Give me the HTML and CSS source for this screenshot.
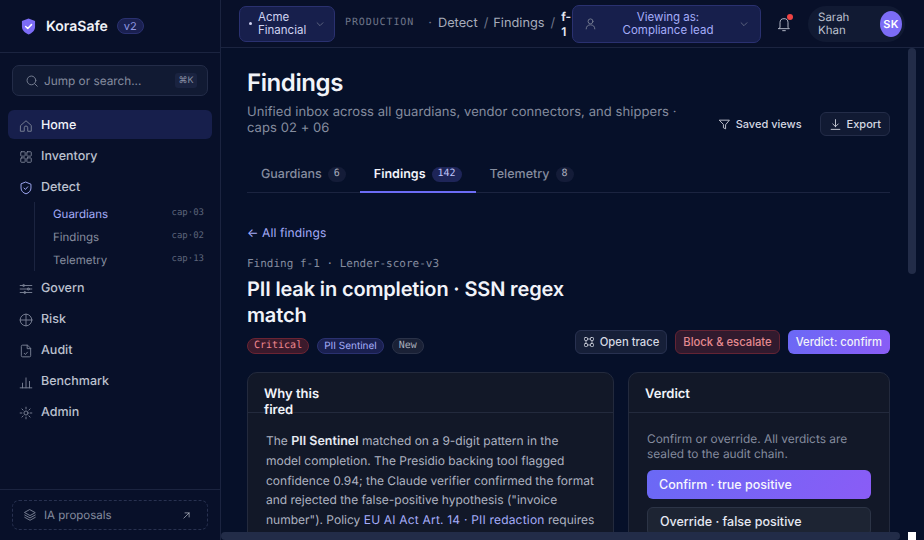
FILE: index.html
```html
<!DOCTYPE html>
<html lang="en">
<head>
    <meta charset="UTF-8">
    <meta name="viewport" content="width=device-width, initial-scale=1.0">
    <title>KoraSafe - Findings</title>
    <link rel="stylesheet" href="styles.css">
</head>
<body>
    <div class="app">
        <!-- Sidebar -->
        <aside class="sidebar">
            <div class="brand">
                <svg class="brand-logo" width="15" height="17" viewBox="0 0 16 18"><path d="M8 0.5 15 3v6c0 4.200-3 7-7 8.500C4 15.500 1 13.200 1 9V3z" fill="#7c6cf6"/><path d="M5 9l2.200 2.100L11.200 7" fill="none" stroke="#fff" stroke-width="1.600" stroke-linecap="round" stroke-linejoin="round"/></svg>
                <span class="brand-name">KoraSafe</span>
                <span class="brand-tag">v2</span>
            </div>
            <div class="search">
                <svg class="icon" width="14" height="14" viewBox="0 0 24 24"><circle cx="11" cy="11" r="7.500"/><path d="M21 21l-4.500-4.500"/></svg>
                <span class="search-text">Jump or search...</span>
                <span class="kbd">⌘K</span>
            </div>
            <nav class="nav">
                <a class="nav-item active">
                    <svg class="icon" width="14" height="14" viewBox="0 0 24 24"><path d="M3 11l9-8 9 8v10h-6v-6a3 3 0 0 0-6 0v6H3z"/></svg>
                    Home
                </a>
                <a class="nav-item">
                    <svg class="icon" width="14" height="14" viewBox="0 0 24 24"><rect x="3" y="3" width="7.500" height="7.500" rx="1"/><rect x="13.500" y="3" width="7.500" height="7.500" rx="1"/><rect x="3" y="13.500" width="7.500" height="7.500" rx="1"/><rect x="13.500" y="13.500" width="7.500" height="7.500" rx="1"/></svg>
                    Inventory
                </a>
                <a class="nav-item">
                    <svg class="icon accent" width="14" height="14" viewBox="0 0 24 24"><path d="M12 2l8.500 3.500V12c0 5-3.500 8.500-8.500 10-5-1.500-8.500-5-8.500-10V5.500z"/><path d="M8.500 12l2.500 2.500 4-4.500"/></svg>
                    Detect
                </a>
                <div class="subnav">
                    <a class="sub-item current"><span>Guardians</span><span class="cap">cap·03</span></a>
                    <a class="sub-item"><span>Findings</span><span class="cap">cap·02</span></a>
                    <a class="sub-item"><span>Telemetry</span><span class="cap">cap·13</span></a>
                </div>
                <a class="nav-item">
                    <svg class="icon" width="14" height="14" viewBox="0 0 24 24"><path d="M2 6h20M2 12h20M2 18h20"/><circle cx="8" cy="6" r="1.800"/><circle cx="16" cy="12" r="1.800"/><circle cx="10" cy="18" r="1.800"/></svg>
                    Govern
                </a>
                <a class="nav-item">
                    <svg class="icon" width="14" height="14" viewBox="0 0 24 24"><circle cx="12" cy="12" r="10"/><path d="M2 12h20M12 2v20"/></svg>
                    Risk
                </a>
                <a class="nav-item">
                    <svg class="icon" width="14" height="14" viewBox="0 0 24 24"><path d="M14 2H6a2 2 0 0 0-2 2v16a2 2 0 0 0 2 2h12a2 2 0 0 0 2-2V8z"/><path d="M14 2v6h6M9 16l2 2 3.500-4"/></svg>
                    Audit
                </a>
                <a class="nav-item">
                    <svg class="icon" width="14" height="14" viewBox="0 0 24 24"><path d="M2 22h20M6 22v-8M12 22V5M18 22v-11"/></svg>
                    Benchmark
                </a>
                <a class="nav-item">
                    <svg class="icon" width="14" height="14" viewBox="0 0 24 24"><circle cx="12" cy="12" r="3.500"/><path d="M12 2v3M12 19v3M2 12h3M19 12h3M5 5l2 2M17 17l2 2M5 19l2-2M17 7l2-2"/></svg>
                    Admin
                </a>
            </nav>
            <div class="sidebar-foot">
                <div class="proposals">
                    <svg class="icon" width="14" height="14" viewBox="0 0 24 24"><path d="M12 3l9 5-9 5-9-5z"/><path d="M3 12l9 5 9-5M3 16l9 5 9-5"/></svg>
                    <span class="proposals-text">IA proposals</span>
                    <svg class="icon light" width="9" height="9" viewBox="0 0 24 24"><path d="M5 19L19 5M8 5h11v11"/></svg>
                </div>
            </div>
        </aside>

        <div class="content">
            <!-- Topbar -->
            <header class="topbar">
                <button class="tenant">
                    <span class="dot"></span>
                    <span class="tenant-name">Acme Financial</span>
                    <svg class="icon" width="10" height="10" viewBox="0 0 24 24"><path d="M5 9l7 7 7-7"/></svg>
                </button>
                <span class="env">PRODUCTION</span>
                <div class="crumbs">
                    <span class="crumb-dot">·</span>
                    <span>Detect</span><span class="sep">/</span>
                    <span>Findings</span><span class="sep">/</span>
                    <span class="crumb-now">f-1</span>
                </div>
                <button class="viewing">
                    <svg class="icon" width="13" height="13" viewBox="0 0 24 24"><circle cx="12" cy="8" r="4.500"/><path d="M4 22c0-5 3.500-7.500 8-7.500s8 2.500 8 7.500"/></svg>
                    <span class="viewing-text">Viewing as: Compliance lead</span>
                    <svg class="icon" width="10" height="10" viewBox="0 0 24 24"><path d="M5 9l7 7 7-7"/></svg>
                </button>
                <div class="bell">
                    <svg class="icon bell-icon" width="16" height="16" viewBox="0 0 24 24"><path d="M6 17V10a6 6 0 0 1 12 0v7l2 2H4z"/><path d="M10 22h4"/></svg>
                    <span class="bell-dot"></span>
                </div>
                <div class="user">
                    <span class="user-name">Sarah Khan</span>
                    <span class="avatar">SK</span>
                </div>
            </header>

            <!-- Main scroll area -->
            <main class="main">
                <div class="viewport">
                    <div class="page">
                        <div class="page-head">
                            <div class="page-title">
                                <h1>Findings</h1>
                                <p>Unified inbox across all guardians, vendor connectors, and shippers · caps 02 + 06</p>
                            </div>
                            <div class="page-actions">
                                <button class="btn-plain">
                                    <svg class="icon light" width="13" height="13" viewBox="0 0 24 24"><path d="M3 4h18l-7 8.500V20l-4-2v-5.500z"/></svg>
                                    Saved views
                                </button>
                                <button class="btn-line">
                                    <svg class="icon light" width="13" height="13" viewBox="0 0 24 24"><path d="M12 3v13M7 11l5 5 5-5M4 21h16"/></svg>
                                    Export
                                </button>
                            </div>
                        </div>

                        <div class="tabs">
                            <a class="tab">Guardians <span class="count">6</span></a>
                            <a class="tab on">Findings <span class="count">142</span></a>
                            <a class="tab">Telemetry <span class="count">8</span></a>
                        </div>

                        <a class="back">← All findings</a>
                        <div class="finding-id">Finding f-1 · Lender-score-v3</div>

                        <div class="finding-head">
                            <div class="finding-title">
                                <h2>PII leak in completion · SSN regex match</h2>
                                <div class="badges">
                                    <span class="badge critical">Critical</span>
                                    <span class="badge sentinel">PII Sentinel</span>
                                    <span class="badge fresh">New</span>
                                </div>
                            </div>
                            <div class="finding-actions">
                                <button class="act act-trace">
                                    <svg class="icon light" width="12" height="12" viewBox="0 0 24 24"><rect x="3" y="3" width="6" height="6" rx="1.500"/><rect x="15" y="3" width="6" height="6" rx="1.500"/><rect x="3" y="15" width="6" height="6" rx="1.500"/><rect x="15" y="15" width="6" height="6" rx="1.500"/><path d="M9 6h6M9 18h6M6 9v6M18 9v6"/></svg>
                                    Open trace
                                </button>
                                <button class="act act-block">Block &amp; escalate</button>
                                <button class="act act-verdict">Verdict: confirm</button>
                            </div>
                        </div>

                        <div class="panels">
                            <section class="card">
                                <div class="card-head"><h3>Why this fired</h3></div>
                                <div class="card-body why">
                                    The <b>PII Sentinel</b> matched on a 9-digit pattern in the model completion. The Presidio backing tool flagged confidence 0.94; the Claude verifier confirmed the format and rejected the false-positive hypothesis ("invoice number"). Policy <a class="link">EU AI Act Art. 14 · PII redaction</a> requires human review before this finding can close.
                                </div>
                            </section>
                            <section class="card">
                                <div class="card-head"><h3>Verdict</h3></div>
                                <div class="card-body verdict">
                                    <p>Confirm or override. All verdicts are sealed to the audit chain.</p>
                                    <button class="choice primary">Confirm · true positive</button>
                                    <button class="choice">Override · false positive</button>
                                    <button class="choice">Escalate to reviewer</button>
                                </div>
                            </section>
                        </div>
                    </div>
                </div>
                <!-- Scrollbars sit over the content -->
                <div class="bar-v"></div>
                <div class="bar-h"></div>
                <div class="bar-corner"></div>
            </main>
        </div>
    </div>
</body>
</html>
```
FILE: styles.css
```css
/* Basic reset */
* {
    margin: 0;
    padding: 0;
    box-sizing: border-box;
}

html, body {
    height: 100%;
    overflow: hidden;
}

body {
    font-family: Inter, 'Liberation Sans', sans-serif;
    text-rendering: geometricPrecision;
    background-color: #081029;
    color: #e6e9f2;
}

button {
    font-family: inherit;
    cursor: pointer;
}

.icon {
    fill: none;
    stroke: #7b8296;
    stroke-width: 1.6;
    stroke-linecap: round;
    stroke-linejoin: round;
    flex-shrink: 0;
}

.icon.accent {
    stroke: #a5adfa;
}

.icon.light {
    stroke: #d5d8e2;
}

.app {
    display: flex;
    height: 540px;
}

/* Sidebar */
.sidebar {
    width: 221px;
    flex-shrink: 0;
    display: flex;
    flex-direction: column;
    background-color: #081029;
    border-right: 1px solid #1b2440;
}

.brand {
    height: 53px;
    display: flex;
    align-items: center;
    padding: 0 21px;
    border-bottom: 1px solid #1b2440;
}

.brand-name {
    margin-left: 10px;
    font-size: 14px;
    font-weight: 600;
    color: #f1f3f9;
}

.brand-tag {
    margin-left: 9px;
    padding: 0 6px;
    height: 16px;
    line-height: 14px;
    font-size: 11px;
    color: #8f96e0;
    background-color: #1a2050;
    border: 1px solid #2a3170;
    border-radius: 8px;
}

.search {
    margin: 12px 12px 0;
    height: 31px;
    display: flex;
    align-items: center;
    padding: 0 10px 0 12px;
    background-color: #111a33;
    border: 1px solid #232c48;
    border-radius: 7px;
}

.search-text {
    margin-left: 5px;
    flex: 1;
    font-size: 11.8px;
    color: #858c9f;
}

.kbd {
    width: 22px;
    height: 15px;
    line-height: 15px;
    text-align: center;
    font-size: 9px;
    color: #8b92a6;
    background-color: #1a2340;
    border-radius: 3px;
}

.nav {
    flex: 1;
    padding: 14px 8px 0;
}

.nav-item {
    height: 29px;
    margin-bottom: 2px;
    display: flex;
    align-items: center;
    gap: 8px;
    padding: 2px 12px 0 11px;
    font-size: 12.5px;
    font-weight: 500;
    color: #bcc1cf;
    border-radius: 6px;
}

.nav-item.active {
    background-color: #171f4c;
    color: #f1f3f9;
}

.subnav {
    margin: -1px 0 2px 26px;
    padding: 0 0 0 1px;
    border-left: 1px solid #1b2440;
}

.sub-item {
    height: 23px;
    display: flex;
    align-items: center;
    justify-content: space-between;
    padding: 0 8px 0 17px;
    font-size: 11.5px;
    color: #868d9f;
}

.sub-item.current {
    color: #a5adfa;
}

.cap {
    font-family: 'DejaVu Sans Mono', monospace;
    font-size: 9px;
    color: #5c6479;
    margin-top: -2px;
}

.sidebar-foot {
    padding: 10px 12px 10px;
    border-top: 1px solid #1b2440;
}

.proposals {
    height: 30px;
    display: flex;
    align-items: center;
    padding: 0 16px 0 10px;
    border: 1px dashed #283150;
    border-radius: 7px;
}

.proposals-text {
    flex: 1;
    margin-left: 7px;
    font-size: 11.5px;
    color: #858c9f;
}

/* Topbar */
.content {
    flex: 1;
    min-width: 0;
    display: flex;
    flex-direction: column;
}

.topbar {
    height: 48px;
    flex-shrink: 0;
    display: flex;
    align-items: center;
    padding: 0 19px 0 18px;
    border-bottom: 1px solid #1b2440;
}

.tenant {
    width: 96px;
    height: 36px;
    flex-shrink: 0;
    display: flex;
    align-items: center;
    padding: 0 9px;
    text-align: left;
    font-size: 11.5px;
    line-height: 13px;
    color: #cfd3f2;
    background-color: #171f4c;
    border: 1px solid #2a3170;
    border-radius: 7px;
}

.dot {
    width: 3px;
    height: 3px;
    margin-right: 6px;
    flex-shrink: 0;
    background-color: #cfd3f2;
    border-radius: 50%;
}

.tenant-name {
    flex: 1;
}

.env {
    margin-left: 10px;
    flex-shrink: 0;
    font-family: 'DejaVu Sans Mono', monospace;
    font-size: 10px;
    letter-spacing: 0.9px;
    color: #6f7689;
    margin-top: -2px;
}

.crumbs {
    flex: 1;
    min-width: 0;
    margin-left: 14px;
    display: flex;
    align-items: center;
    gap: 5px;
    font-size: 12.8px;
    color: #a7acbb;
}

.crumb-dot {
    color: #6f7689;
    margin-right: 1px;
}

.sep {
    margin-left: 1px;
    color: #6f7689;
}

.crumb-now {
    width: 10px;
    margin-left: 1px;
    font-size: 12px;
    line-height: 15px;
    color: #e6e9f2;
    font-weight: 600;
    word-break: break-all;
}

.viewing {
    width: 189px;
    height: 38px;
    flex-shrink: 0;
    display: flex;
    align-items: center;
    padding: 0 11px;
    font-size: 11.5px;
    line-height: 13px;
    color: #a5adfa;
    background-color: #171f4c;
    border: 1px solid #2a3170;
    border-radius: 7px;
}

.viewing-text {
    flex: 1;
    padding: 0 14px;
    text-align: center;
}

.bell {
    position: relative;
    margin-left: 15px;
    height: 16px;
}

.bell-icon {
    stroke: #bcc1cf;
    stroke-width: 1.4;
}

.bell-dot {
    position: absolute;
    top: -2px;
    right: -1px;
    width: 6px;
    height: 6px;
    background-color: #ef4444;
    border-radius: 50%;
}

.user {
    margin-left: 16px;
    width: 97px;
    height: 36px;
    flex-shrink: 0;
    display: flex;
    align-items: center;
    padding: 0 3px 0 10px;
    background-color: #111a33;
    border-radius: 18px;
}

.user-name {
    flex: 1;
    font-size: 11.5px;
    line-height: 13px;
    color: #bcc1cf;
    padding-right: 20px;
}

.avatar {
    width: 22px;
    height: 26px;
    flex-shrink: 0;
    text-align: center;
    line-height: 26px;
    font-size: 11px;
    letter-spacing: 0.3px;
    font-weight: 600;
    color: #fff;
    background-color: #7c6cf6;
    border-radius: 50%;
}

/* Main */
.main {
    position: relative;
    flex: 1;
    min-height: 0;
    padding-bottom: 8px;
    background-color: #061029;
}

.viewport {
    height: 100%;
    overflow: hidden;
}

.bar-v {
    position: absolute;
    top: 0;
    right: 8px;
    width: 8px;
    height: 226px;
    background-color: #222c48;
    border-radius: 4px;
}

.bar-h {
    position: absolute;
    left: 0;
    bottom: 0;
    width: 679px;
    height: 8px;
    background-color: #222c48;
    border-radius: 4px;
}

.bar-corner {
    position: absolute;
    right: 8px;
    bottom: 0;
    width: 8px;
    height: 8px;
    background-color: #fff;
}

.page {
    width: 695px;
    padding: 20px 26px 40px;
}

.page-head {
    display: flex;
    align-items: flex-end;
    justify-content: space-between;
    gap: 18px;
}

h1 {
    font-size: 24px;
    line-height: 29px;
    font-weight: 600;
    letter-spacing: -0.4px;
    color: #f1f3f9;
}

.page-title p {
    margin-top: 8px;
    font-size: 13px;
    letter-spacing: 0.07px;
    line-height: 15.5px;
    color: #858c9f;
}

.page-actions {
    display: flex;
    align-items: center;
    gap: 10px;
    flex-shrink: 0;
}

.btn-plain, .btn-line {
    height: 24px;
    display: flex;
    align-items: center;
    gap: 5px;
    font-size: 11px;
    font-weight: 500;
    color: #d5d8e2;
    background: none;
    border: none;
}

.btn-plain {
    padding: 0 8px;
}

.btn-line {
    padding: 0 8px;
    background-color: #111a33;
    border: 1px solid #232c48;
    border-radius: 6px;
}

.tabs {
    margin-top: 19px;
    display: flex;
    border-bottom: 1px solid #1b2440;
}

.tab {
    height: 38px;
    margin-bottom: -1px;
    display: flex;
    align-items: center;
    gap: 6px;
    padding: 2px 14px 0;
    font-size: 12.5px;
    font-weight: 500;
    color: #858c9f;
    border-bottom: 2px solid transparent;
}

.tab.on {
    color: #f1f3f9;
    font-weight: 600;
    border-bottom-color: #6c6cf5;
}

.count {
    height: 15px;
    min-width: 18px;
    padding: 0 6px;
    line-height: 14px;
    text-align: center;
    font-family: 'DejaVu Sans Mono', monospace;
    font-size: 10px;
    font-weight: 400;
    color: #a9aebd;
    background-color: #141c38;
    border-radius: 8px;
}

.tab.on .count {
    color: #c0c5fb;
    background-color: #1e2558;
}

.back {
    display: block;
    margin-top: 32px;
    font-size: 12px;
    letter-spacing: 0.12px;
    line-height: 15px;
    color: #a5adfa;
}

.finding-id {
    margin-top: 17px;
    font-family: 'DejaVu Sans Mono', monospace;
    font-size: 11px;
    line-height: 13px;
    color: #858c9f;
}

.finding-head {
    display: flex;
    align-items: flex-end;
    justify-content: space-between;
    margin-top: 6px;
}

.finding-title {
    width: 326px;
}

h2 {
    font-size: 20px;
    line-height: 26px;
    font-weight: 600;
    letter-spacing: -0.15px;
    color: #f1f3f9;
}

.badges {
    margin-top: 10px;
    display: flex;
    gap: 8px;
}

.badge {
    height: 16px;
    line-height: 14px;
    padding: 0 6px;
    font-size: 10px;
    border-radius: 8px;
    border: 1px solid;
}

.critical {
    font-family: 'DejaVu Sans Mono', monospace;
    color: #f0878f;
    background-color: #3b1a2c;
    border-color: #6b2433;
}

.sentinel {
    color: #a5adfa;
    background-color: #1a2050;
    border-color: #2a3170;
}

.fresh {
    font-family: 'DejaVu Sans Mono', monospace;
    color: #a9aebd;
    background-color: #1a2136;
    border-color: #2a3248;
}

.finding-actions {
    display: flex;
    gap: 8px;
}

.act {
    height: 24px;
    display: flex;
    align-items: center;
    gap: 5px;
    padding: 0 7px;
    font-size: 11.25px;
    font-weight: 500;
    border: 1px solid;
    border-radius: 6px;
}

.act-trace {
    color: #d5d8e2;
    background-color: #161f38;
    border-color: #283150;
}

.act-block {
    color: #e58a90;
    background-color: #311a2e;
    border-color: #632434;
}

.act-verdict {
    padding: 0 8px;
    color: #f1f3f9;
    background: linear-gradient(120deg, #6a69f5, #8a5cf6);
    border: none;
}

.panels {
    margin-top: 18px;
    display: grid;
    grid-template-columns: 367px 262px;
    gap: 14px;
}

.card {
    background-color: #121828;
    border: 1px solid #232a3d;
    border-radius: 10px;
}

.card-head {
    height: 40px;
    padding: 13px 16px 0;
    border-bottom: 1px solid #232a3d;
}

h3 {
    width: 70px;
    font-size: 13px;
    line-height: 16px;
    font-weight: 600;
    color: #f1f3f9;
}

.card:last-child h3 {
    width: auto;
}

.card-body {
    padding: 18px;
    font-size: 12px;
    line-height: 19.8px;
    color: #aeb3c1;
}

.why b {
    font-size: 12.5px;
    line-height: 1;
    font-weight: 600;
    color: #e6e9f2;
}

.link {
    letter-spacing: 0.2px;
    color: #a5adfa;
}

.verdict p {
    font-size: 11.9px;
    line-height: 15px;
    color: #858c9f;
    margin-bottom: 9px;
}

.choice {
    display: block;
    width: 100%;
    height: 29px;
    margin-bottom: 8px;
    padding: 0 12px;
    text-align: left;
    font-size: 12.5px;
    font-weight: 500;
    color: #e6e9f2;
    background-color: #1d2433;
    border: 1px solid #2c3446;
    border-radius: 6px;
}

.choice.primary {
    background: linear-gradient(120deg, #6a69f5, #8a5cf6);
    border: none;
    color: #f6f6fd;
}
```
